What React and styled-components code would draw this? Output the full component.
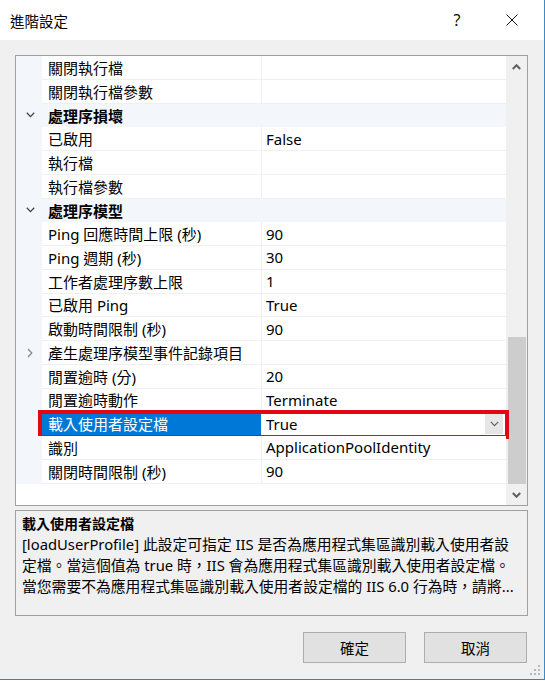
import React from "react";
import styled, { createGlobalStyle } from "styled-components";

const GlobalStyle = createGlobalStyle`
  html, body { margin: 0; padding: 0; background: #ffffff; }
  body { font-family: "Noto Sans", "Noto Sans CJK TC", sans-serif; }
  * { box-sizing: border-box; }
`;

const Window = styled.div`
  width: 545px;
  height: 680px;
  display: flex;
  flex-direction: column;
  border-right: 1px solid #3d8ac4;
  border-bottom: 1px solid #2f84c2;
  background: #f0f0f0;
  position: relative;
  font-family: "Noto Sans", "Noto Sans CJK TC", sans-serif;
  color: #000;
`;

const TitleBar = styled.div`
  height: 40px;
  background: #ffffff;
  display: flex;
  align-items: center;
  padding-left: 10px;
  font-size: 14.5px;
  color: #000;
`;

const Title = styled.div`
  flex: 1;
`;

const TitleButton = styled.div`
  width: ${(p) => p.$w}px;
  height: 40px;
  display: flex;
  align-items: center;
  justify-content: center;
  font-size: 16px;
  color: #111;
`;

const Body = styled.div`
  flex: 1;
  display: flex;
  flex-direction: column;
  padding: 15px 16px 0 15px;
`;

const Grid = styled.div`
  height: 451px;
  border: 1px solid #a0a0a0;
  background: #ffffff;
  display: flex;
`;

const Rows = styled.div`
  width: 490px;
  display: flex;
  flex-direction: column;
  background: #ffffff;
`;

const Row = styled.div`
  height: 23.75px;
  display: flex;
  position: relative;
  font-size: 15px;
  background: ${(p) => (p.$cat ? "#f3f6fb" : "#ffffff")};
`;

const Gutter = styled.div`
  width: 26px;
  background: #f3f6fb;
  display: flex;
  align-items: center;
  justify-content: center;
  padding-left: 2px;
`;

const NameCell = styled.div`
  width: 219px;
  display: flex;
  align-items: center;
  padding-left: 6px;
  white-space: nowrap;
  background: ${(p) => (p.$selected ? "#0078d7" : "transparent")};
  color: ${(p) => (p.$selected ? "#ffffff" : "#000")};
  font-weight: ${(p) => (p.$cat ? 700 : 400)};
  border-bottom: ${(p) => (p.$cat ? "none" : "1px solid #f0f0f0")};
`;

const ValueCell = styled.div`
  flex: 1;
  display: flex;
  align-items: center;
  padding-left: 4px;
  border-left: 1px solid #f0f0f0;
  border-bottom: 1px solid #f0f0f0;
  white-space: nowrap;
`;

const ValueText = styled.span`
  flex: 1;
`;

const DropButton = styled.div`
  width: 18px;
  height: 20px;
  margin-right: 3px;
  background: #e6e6e6;
  display: flex;
  align-items: center;
  justify-content: center;
`;

const RedFrame = styled.div`
  position: absolute;
  left: 22px;
  right: -3px;
  top: -2px;
  bottom: -3px;
  border: 4px solid #e30613;
  pointer-events: none;
`;

const Filler = styled.div`
  flex: 1;
  background: #ffffff;
`;

const ScrollBar = styled.div`
  width: 21px;
  background: #f0f0f0;
  display: flex;
  flex-direction: column;
`;

const ScrollArrow = styled.div`
  height: 21px;
  display: flex;
  align-items: center;
  justify-content: center;
`;

const Track = styled.div`
  flex: 1;
  display: flex;
  flex-direction: column;
  justify-content: flex-end;
  align-items: center;
`;

const Thumb = styled.div`
  width: 18px;
  height: 147px;
  background: #cdcdcd;
`;

const Description = styled.div`
  margin-top: 4px;
  height: 106px;
  border: 1px solid #a0a0a0;
  padding: 2px 6px;
  font-size: 14.8px;
  line-height: 21px;
`;

const DescTitle = styled.div`
  font-weight: 700;
  font-size: 14px;
`;

const DescLine = styled.div`
  white-space: nowrap;
`;

const Buttons = styled.div`
  display: flex;
  justify-content: flex-end;
  gap: 18px;
  margin-top: 16px;
  padding-right: 1px;
`;

const Button = styled.div`
  width: 103px;
  height: 31px;
  background: #e1e1e1;
  border: 1px solid #adadad;
  display: flex;
  align-items: center;
  justify-content: center;
  font-size: 14.5px;
`;

const Grip = styled.svg`
  position: absolute;
  right: 3px;
  bottom: 3px;
`;

const ChevronDown = ({ color = "#404040", w = 9, sw = 1.3 }) => (
  <svg width={w} height={6} viewBox="0 0 9 6">
    <path d="M0.8 0.8 L4.5 4.6 L8.2 0.8" fill="none" stroke={color} strokeWidth={sw} />
  </svg>
);

const ChevronRight = () => (
  <svg width={6} height={10} viewBox="0 0 6 10">
    <path d="M1 1 L4.8 5 L1 9" fill="none" stroke="#8a8a8a" strokeWidth="1.3" />
  </svg>
);

const ScrollChevron = ({ up }) => (
  <svg width={9} height={6} viewBox="0 0 9 6">
    <path
      d={up ? "M0.8 5 L4.5 1.2 L8.2 5" : "M0.8 1 L4.5 4.8 L8.2 1"}
      fill="none"
      stroke="#606060"
      strokeWidth="2"
    />
  </svg>
);

const rows = [
  { name: "關閉執行檔", value: "" },
  { name: "關閉執行檔參數", value: "" },
  { cat: true, name: "處理序損壞" },
  { name: "已啟用", value: "False" },
  { name: "執行檔", value: "" },
  { name: "執行檔參數", value: "" },
  { cat: true, name: "處理序模型" },
  { name: "Ping 回應時間上限 (秒)", value: "90" },
  { name: "Ping 週期 (秒)", value: "30" },
  { name: "工作者處理序數上限", value: "1" },
  { name: "已啟用 Ping", value: "True" },
  { name: "啟動時間限制 (秒)", value: "90" },
  { name: "產生處理序模型事件記錄項目", value: "", expand: true },
  { name: "閒置逾時 (分)", value: "20" },
  { name: "閒置逾時動作", value: "Terminate" },
  { name: "載入使用者設定檔", value: "True", selected: true },
  { name: "識別", value: "ApplicationPoolIdentity" },
  { name: "關閉時間限制 (秒)", value: "90" },
];

export default function App() {
  return (
    <>
      <GlobalStyle />
      <Window>
        <TitleBar>
          <Title>進階設定</Title>
          <TitleButton $w={46}>?</TitleButton>
          <TitleButton $w={64}>
            <svg width="12" height="12" viewBox="0 0 12 12">
              <path d="M0.5 0.5 L11.5 11.5 M11.5 0.5 L0.5 11.5" stroke="#111" strokeWidth="1" />
            </svg>
          </TitleButton>
        </TitleBar>
        <Body>
          <Grid>
            <Rows>
              {rows.map((r, i) =>
                r.cat ? (
                  <Row key={i} $cat>
                    <Gutter>
                      <ChevronDown />
                    </Gutter>
                    <NameCell $cat>{r.name}</NameCell>
                  </Row>
                ) : (
                  <Row key={i}>
                    <Gutter>{r.expand ? <ChevronRight /> : null}</Gutter>
                    <NameCell $selected={r.selected}>{r.name}</NameCell>
                    <ValueCell>
                      <ValueText>{r.value}</ValueText>
                      {r.selected ? (
                        <DropButton>
                          <ChevronDown color="#606060" sw={1.1} />
                        </DropButton>
                      ) : null}
                    </ValueCell>
                    {r.selected ? <RedFrame /> : null}
                  </Row>
                )
              )}
              <Filler />
            </Rows>
            <ScrollBar>
              <ScrollArrow>
                <ScrollChevron up />
              </ScrollArrow>
              <Track>
                <Thumb />
              </Track>
              <ScrollArrow>
                <ScrollChevron />
              </ScrollArrow>
            </ScrollBar>
          </Grid>
          <Description>
            <DescTitle>載入使用者設定檔</DescTitle>
            <DescLine>[loadUserProfile] 此設定可指定 IIS 是否為應用程式集區識別載入使用者設</DescLine>
            <DescLine>定檔。當這個值為 true 時，IIS 會為應用程式集區識別載入使用者設定檔。</DescLine>
            <DescLine>當您需要不為應用程式集區識別載入使用者設定檔的 IIS 6.0 行為時，請將...</DescLine>
          </Description>
          <Buttons>
            <Button>確定</Button>
            <Button>取消</Button>
          </Buttons>
        </Body>
        <Grip width="12" height="12" viewBox="0 0 12 12">
          {[
            [10, 2],
            [10, 6],
            [6, 6],
            [10, 10],
            [6, 10],
            [2, 10],
          ].map(([x, y], i) => (
            <rect key={i} x={x - 1} y={y - 1} width="2" height="2" fill="#b8b8b8" />
          ))}
        </Grip>
      </Window>
    </>
  );
}
